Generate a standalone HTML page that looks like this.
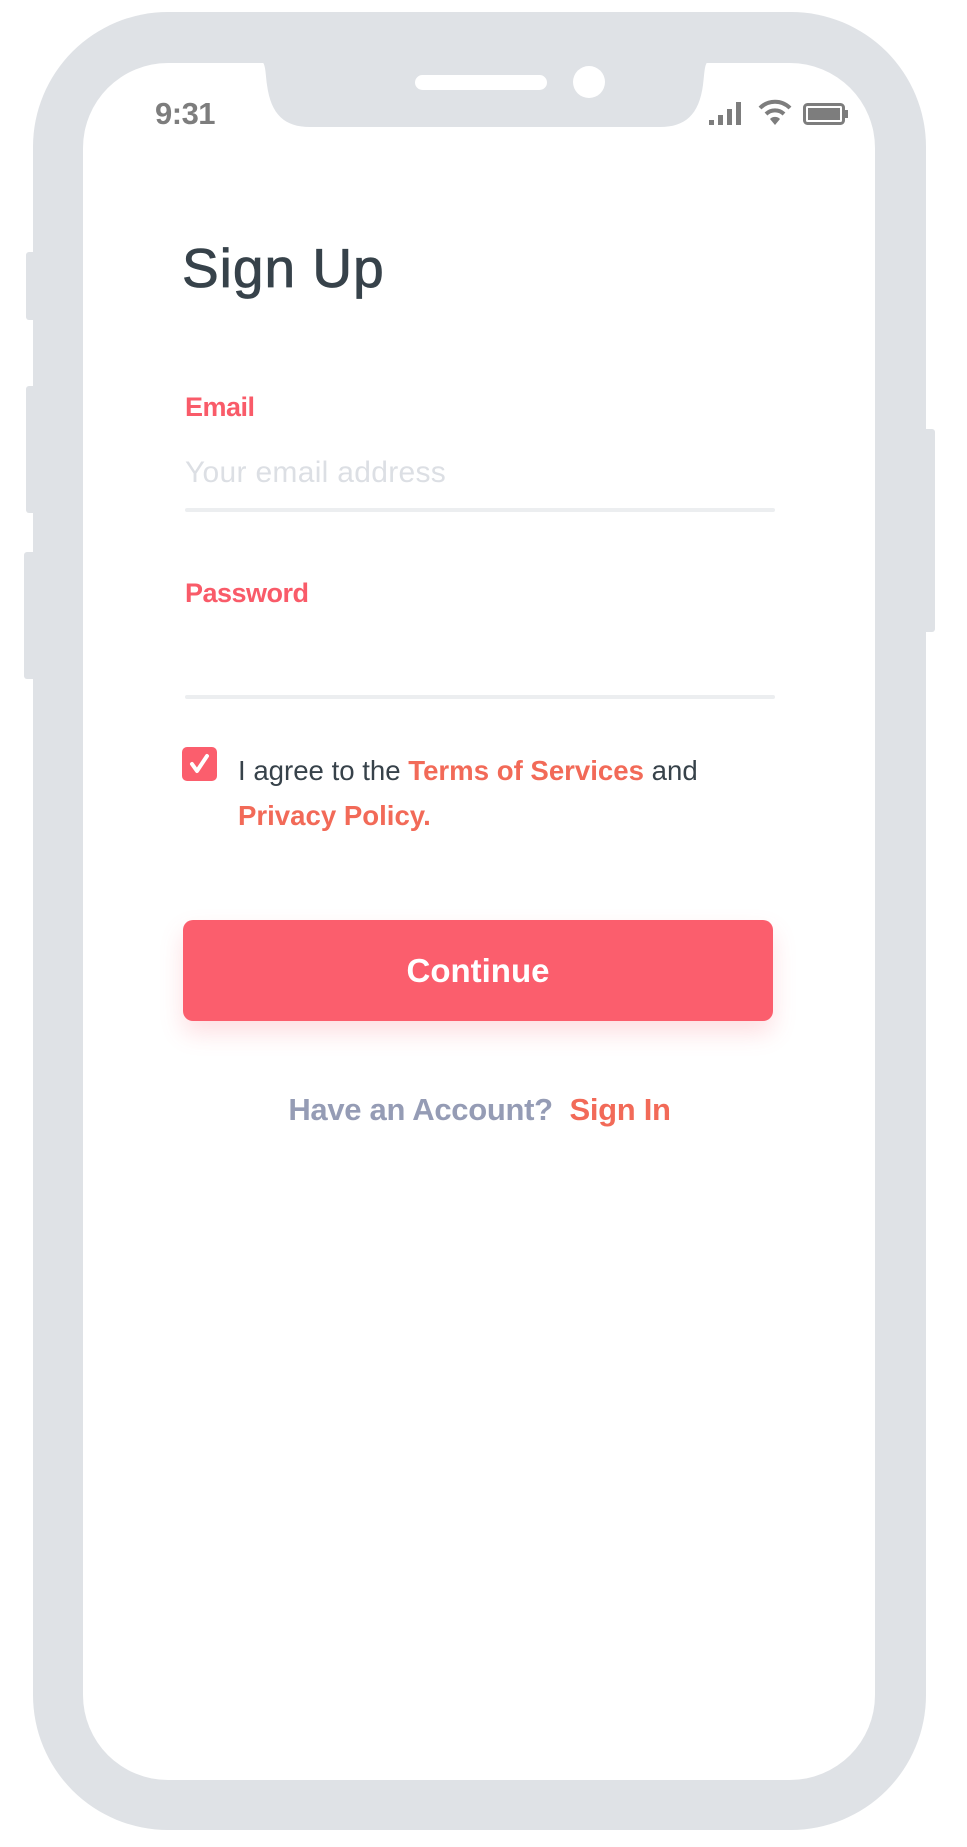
<!DOCTYPE html>
<html><head><meta charset="utf-8"><style>
*{margin:0;padding:0;box-sizing:border-box}
body{width:967px;height:1847px;background:#fff;position:relative;overflow:hidden;font-family:"Liberation Sans",sans-serif}
.a{position:absolute}
.phone{left:33px;top:12px;width:893px;height:1818px;background:#dfe2e6;border-radius:135px}
.screen{left:83px;top:63px;width:792px;height:1717px;background:#fff;border-radius:85px}
.btnside{background:#dfe2e6;border-radius:3px}
.lbl{color:#f95b69;font-weight:bold;font-size:27px;letter-spacing:-0.5px}
.line{height:4px;background:#eceef0;border-radius:2px;left:185px;width:590px}
.t{font-size:27.6px;color:#37424a;letter-spacing:0px}
.o{color:#f26a58;font-weight:bold}
</style></head><body>
<div class="a btnside" style="left:26px;top:252px;width:10px;height:68px"></div>
<div class="a btnside" style="left:26px;top:386px;width:10px;height:127px"></div>
<div class="a btnside" style="left:24px;top:552px;width:12px;height:127px"></div>
<div class="a btnside" style="left:923px;top:429px;width:12px;height:203px"></div>
<div class="a phone"></div>
<div class="a screen"></div>
<svg class="a" style="left:240px;top:60px" width="490" height="70" viewBox="0 0 490 70">
<path d="M0 0 H18 C26 0 25 10 27 25 C31 55 45 67 70 67 H420 C445 67 459 55 463 25 C465 10 464 0 472 0 H490 V0 H0Z" fill="#dfe2e6"/>
</svg>
<div class="a" style="left:415px;top:75px;width:132px;height:15px;background:#fff;border-radius:8px"></div>
<div class="a" style="left:573px;top:66px;width:32px;height:32px;background:#fff;border-radius:50%"></div>
<div class="a" style="left:155px;top:96px;font-size:31px;font-weight:bold;color:#7d7d7d;letter-spacing:-0.5px">9:31</div>
<svg class="a" style="left:709px;top:100px" width="40" height="26" viewBox="0 0 40 26">
<rect x="0" y="20" width="5" height="5" fill="#7d7d7d"/><rect x="9" y="15" width="5" height="10" fill="#7d7d7d"/><rect x="18" y="9" width="5" height="16" fill="#7d7d7d"/><rect x="27" y="2" width="5" height="23" fill="#7d7d7d"/>
</svg>
<svg class="a" style="left:757px;top:98px" width="36" height="30" viewBox="0 0 36 30">
<path d="M3 10 A21 21 0 0 1 33 10" stroke="#7d7d7d" stroke-width="4" fill="none"/>
<path d="M9 16 A13 13 0 0 1 27 16" stroke="#7d7d7d" stroke-width="4" fill="none"/>
<path d="M13 21 L18 27 L23 21 A7 7 0 0 0 13 21Z" fill="#7d7d7d"/>
</svg>
<svg class="a" style="left:803px;top:103px" width="46" height="22" viewBox="0 0 46 22">
<rect x="1.5" y="1.5" width="39" height="19" rx="3" stroke="#7d7d7d" stroke-width="3" fill="none"/>
<rect x="5" y="5" width="32" height="12" fill="#7d7d7d"/><rect x="42" y="7" width="3" height="8" fill="#7d7d7d"/>
</svg>
<div class="a" style="left:182px;top:236px;font-size:55px;color:#37424a;letter-spacing:1px;-webkit-text-stroke:0.8px #37424a">Sign Up</div>
<div class="a lbl" style="left:185px;top:392px">Email</div>
<div class="a" style="left:185px;top:456px;font-size:30px;color:#dcdfe4;letter-spacing:0.3px">Your email address</div>
<div class="a line" style="top:508px"></div>
<div class="a lbl" style="left:185px;top:578px">Password</div>
<div class="a line" style="top:695px"></div>
<div class="a" style="left:182px;top:747px;width:35px;height:34px;background:#fb5e6d;border-radius:5px"></div>
<svg class="a" style="left:182px;top:747px" width="35" height="34" viewBox="0 0 35 34"><path d="M10 17 L15 24 L25 9" stroke="#fff" stroke-width="4" fill="none" stroke-linecap="round" stroke-linejoin="round"/></svg>
<div class="a t" style="left:238px;top:755px;white-space:nowrap">I agree to the <span class="o">Terms of Services</span> and</div>
<div class="a t" style="left:238px;top:800px"><span class="o">Privacy Policy.</span></div>
<div class="a" style="left:183px;top:920px;width:590px;height:101px;background:#fb5e6d;border-radius:10px;box-shadow:0 12px 24px rgba(251,94,109,0.2);color:#fff;font-weight:bold;font-size:33px;text-align:center;line-height:101px">Continue</div>
<div class="a" style="left:0;width:967px;top:1092px;text-align:center;font-size:31px;font-weight:bold;letter-spacing:-0.3px;padding-right:8px"><span style="color:#959cb5">Have an Account?</span>&nbsp; <span style="color:#f26a58">Sign In</span></div>
</body></html>
